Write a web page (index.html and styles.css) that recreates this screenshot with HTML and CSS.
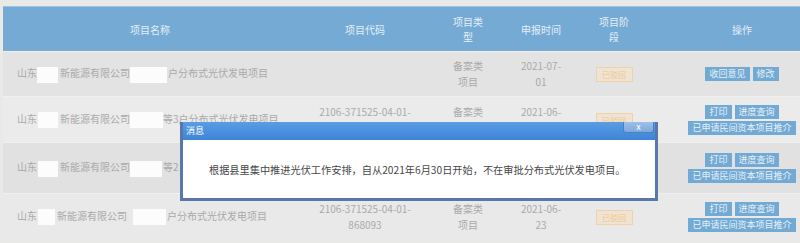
FILE: index.html
```html
<!DOCTYPE html>
<html lang="zh-CN">
<head>
    <meta charset="UTF-8">
    <meta name="viewport" content="width=device-width, initial-scale=1.0">
    <title>项目列表</title>
    <link rel="stylesheet" href="styles.css">
</head>
<body>
    <div class="page">
        <table class="grid">
            <colgroup>
                <col class="col-name">
                <col class="col-code">
                <col class="col-type">
                <col class="col-time">
                <col class="col-stage">
                <col class="col-ops">
            </colgroup>
            <thead>
                <tr>
                    <th>项目名称</th>
                    <th>项目代码</th>
                    <th>项目类<br>型</th>
                    <th>申报时间</th>
                    <th>项目阶<br>段</th>
                    <th>操作</th>
                </tr>
            </thead>
            <tbody>
                <tr class="row-1">
                    <td class="name">山东<span class="mask m-a"></span>新能源有限公司<span class="mask m-b"></span>户分布式光伏发电项目</td>
                    <td></td>
                    <td>备案类<br>项目</td>
                    <td>2021-07-<br>01</td>
                    <td><span class="badge">已驳回</span></td>
                    <td class="ops">
                        <div class="btn-line"><a class="btn">收回意见</a><a class="btn">修改</a></div>
                    </td>
                </tr>
                <tr class="row-2">
                    <td class="name">山东<span class="mask m-c"></span>新能源有限公司<span class="mask m-d"></span>等3户分布式光伏发电项目</td>
                    <td>2106-371525-04-01-<br>&nbsp;</td>
                    <td>备案类<br>&nbsp;</td>
                    <td>2021-06-<br>&nbsp;</td>
                    <td><span class="badge">已驳回</span></td>
                    <td class="ops">
                        <div class="btn-line"><a class="btn">打印</a><a class="btn">进度查询</a></div>
                        <div class="btn-line"><a class="btn">已申请民间资本项目推介</a></div>
                    </td>
                </tr>
                <tr class="row-3">
                    <td class="name">山东<span class="mask m-c"></span>新能源有限公司<span class="mask m-e"></span>等2</td>
                    <td></td>
                    <td></td>
                    <td></td>
                    <td></td>
                    <td class="ops">
                        <div class="btn-line"><a class="btn">打印</a><a class="btn">进度查询</a></div>
                        <div class="btn-line"><a class="btn">已申请民间资本项目推介</a></div>
                    </td>
                </tr>
                <tr class="row-4">
                    <td class="name">山东<span class="mask m-f"></span>新能源有限公司<span class="mask m-g"></span>户分布式光伏发电项目</td>
                    <td>2106-371525-04-01-<br>868093</td>
                    <td>备案类<br>项目</td>
                    <td>2021-06-<br>23</td>
                    <td><span class="badge">已驳回</span></td>
                    <td class="ops">
                        <div class="btn-line"><a class="btn">打印</a><a class="btn">进度查询</a></div>
                        <div class="btn-line"><a class="btn">已申请民间资本项目推介</a></div>
                    </td>
                </tr>
            </tbody>
        </table>

        <!-- message box over the list -->
        <div class="dialog">
            <div class="dialog-title">
                <span>消息</span>
                <span class="dialog-close">x</span>
            </div>
            <div class="dialog-body">根据县里集中推进光伏工作安排，自从2021年6月30日开始，不在审批分布式光伏发电项目。</div>
        </div>
    </div>
</body>
</html>
```

FILE: styles.css
```css
body {
    margin: 0;
    background-color: #e9e9e7;
    font-family: "Noto Sans CJK SC", sans-serif;
    overflow: hidden;
}
.page {
    position: relative;
    height: 243px;
    padding: 6px 0 0 3px;
    box-sizing: border-box;
}
.grid {
    border-collapse: collapse;
    table-layout: fixed;
    width: 832px;
}
.col-name { width: 294px; }
.col-code { width: 136px; }
.col-type { width: 70px; }
.col-time { width: 76px; }
.col-stage { width: 70px; }
.col-ops { width: 186px; }

.grid th {
    height: 44px;
    padding: 0;
    background-color: #75aad5;
    border-top: 1px solid #9cc3e3;
    color: #e4eef7;
    font-size: 10px;
    font-weight: normal;
    line-height: 15px;
}
.grid td {
    padding: 0;
    text-align: center;
    vertical-align: middle;
    color: #aaaaaa;
    font-size: 10px;
    line-height: 16px;
    border-top: 1px solid #f0f0f0;
}
.row-1 { height: 45px; background-color: #e3e3e3; }
.row-2 { height: 46px; background-color: #ebebeb; }
.row-3 { height: 51px; background-color: #e1e1e1; }
.row-4 { height: 46px; background-color: #e9e9e9; }

.grid td.name {
    text-align: left;
    padding-left: 14px;
    white-space: nowrap;
}
.mask {
    display: inline-block;
    height: 16px;
    vertical-align: middle;
    background-color: #fcfcfc;
}
.m-a { width: 21px; margin: 0 2px 0 0; }
.m-b { width: 37px; margin: 0 1px 0 0; }
.m-c { width: 20px; margin: 0 2px 0 1px; }
.m-d { width: 33px; }
.m-e { width: 32px; margin: 0 1px 0 0; }
.m-f { width: 17px; margin: 0 2px 0 1px; }
.m-g { width: 33px; margin: 0 1px 0 6px; }

.badge {
    display: inline-block;
    width: 35px;
    height: 13px;
    line-height: 13px;
    font-size: 8px;
    color: #f1c48a;
    background-color: #efe4d4;
    border: 1px solid #f1d2a8;
}
.ops {
    white-space: nowrap;
}
.btn-line {
    display: flex;
    justify-content: center;
    gap: 3px;
    margin: 2px 0;
}
.btn {
    display: inline-block;
    height: 14px;
    line-height: 14px;
    padding: 0 4px;
    font-size: 9px;
    color: #e6f0f8;
    background-color: #72aad4;
}

.dialog {
    position: absolute;
    left: 180px;
    top: 122px;
    width: 478px;
    height: 79px;
    box-sizing: border-box;
    padding: 0 3px 3px;
    background-color: #5878ab;
}
.dialog-title {
    display: flex;
    justify-content: space-between;
    align-items: flex-start;
    height: 18px;
    padding-left: 3px;
    background: linear-gradient(#5a9de4, #3d84d6);
    color: #ffffff;
    font-size: 9px;
    line-height: 18px;
}
.dialog-close {
    width: 29px;
    height: 10px;
    margin-right: 1px;
    line-height: 9px;
    text-align: center;
    font-size: 9px;
    color: #ffffff;
    background: linear-gradient(#9cc0e8, #7ea9dc);
    border: 1px solid #4f7ec0;
    border-top: none;
    border-radius: 0 0 3px 3px;
}
.dialog-body {
    display: flex;
    align-items: center;
    height: 58px;
    padding-left: 26px;
    background-color: #ffffff;
    color: #474747;
    font-size: 10.2px;
}
```
